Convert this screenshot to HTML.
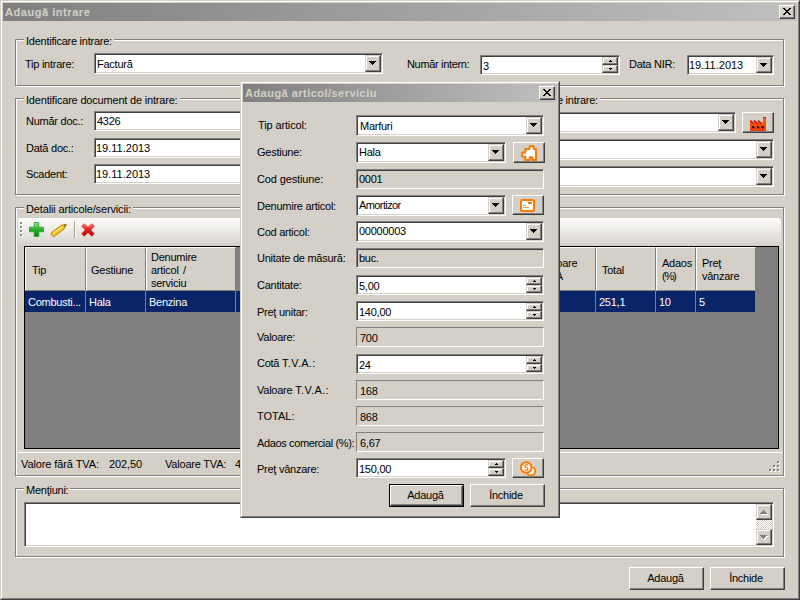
<!DOCTYPE html>
<html>
<head>
<meta charset="utf-8">
<title>Adaugă intrare</title>
<style>
*{box-sizing:border-box;margin:0;padding:0}
html,body{width:800px;height:600px;overflow:hidden;background:#d4d0c8}
body{font-family:"Liberation Sans",sans-serif;font-size:11px;color:#000;position:relative;letter-spacing:-.25px}
.a{position:absolute}
.t{position:absolute;white-space:nowrap;line-height:13px;height:13px}
/* window frames */
.win{position:absolute;background:#d4d0c8;border:1px solid;border-color:#d4d0c8 #404040 #404040 #d4d0c8}
.win>.in{position:absolute;left:0;top:0;right:0;bottom:0;border:1px solid;border-color:#fff #808080 #808080 #fff}
.cap{position:absolute;height:18px;background:linear-gradient(90deg,#808080,#c0c0c0);color:#d4d0c8;font-weight:bold;font-size:11px;line-height:18px;white-space:nowrap;overflow:hidden}
.cap span{position:absolute;top:0;letter-spacing:.55px}
/* raised button */
.btn{position:absolute;background:#d4d0c8;border:1px solid;border-color:#fff #404040 #404040 #fff;box-shadow:inset -1px -1px 0 #808080,inset 1px 1px 0 #d4d0c8;text-align:center}
.btn.def{outline:1px solid #000}
/* sunken box */
.sk{position:absolute;background:#fff;border:1px solid;border-color:#808080 #fff #fff #808080;box-shadow:inset 1px 1px 0 #404040,inset -1px -1px 0 #d4d0c8;overflow:hidden}
.sk.dis{background:#d4d0c8}
.sk .v{position:absolute;left:3px;top:4px;line-height:13px;white-space:nowrap}
/* group box */
.gb{position:absolute;border:1px solid #808080;box-shadow:1px 1px 0 #fff,inset 1px 1px 0 #fff}
.gb>.lg{position:absolute;top:-5px;left:8px;background:#d4d0c8;padding:0 2px;line-height:13px;white-space:nowrap}
/* small arrow glyphs */
.dn{position:absolute;width:7px;height:4px;background:#000;clip-path:polygon(0 0,7px 0,7px 1px,6px 1px,6px 2px,5px 2px,5px 3px,4px 3px,4px 4px,3px 4px,3px 3px,2px 3px,2px 2px,1px 2px,1px 1px,0 1px)}
.upa{position:absolute;width:7px;height:4px;background:#000;clip-path:polygon(3px 0,4px 0,4px 1px,5px 1px,5px 2px,6px 2px,6px 3px,7px 3px,7px 4px,0 4px,0 3px,1px 3px,1px 2px,2px 2px,2px 1px,3px 1px)}
.up3{position:absolute;width:0;height:0;border:3px solid transparent;border-bottom-color:#000;border-top:0}
.dn3{position:absolute;width:0;height:0;border:3px solid transparent;border-top-color:#000;border-bottom:0}

.hd{background:#d4d0c8;border-left:1px solid #fff;border-top:1px solid #fff;border-right:1px solid #808080;border-bottom:1px solid #808080;overflow:hidden}
.hd span{position:absolute;left:6px;line-height:13px;white-space:nowrap}
.rc{top:291px;height:21px;color:#fff;border-right:1px solid #808080;overflow:hidden}
.rc span{position:absolute;left:3px;top:5px;line-height:13px;white-space:nowrap}
.st{letter-spacing:-.1px}

.sb{position:absolute;background:#d4d0c8;border:1px solid;border-color:#d4d0c8 #404040 #404040 #d4d0c8;box-shadow:inset -1px -1px 0 #808080,inset 1px 1px 0 #fff}
.au,.ad{position:absolute;width:3px;height:1px;background:#000}
.au:after,.ad:after{content:"";position:absolute;left:1px;width:1px;height:1px;background:#000}
.au:after{top:-1px}.ad:after{top:1px}
.ic{position:absolute}
.lb{position:absolute;background:#d4d0c8;border:1px solid;border-color:#808080 #fff #fff #808080;overflow:hidden}
.lb .v{position:absolute;left:3px;top:4px;line-height:13px;white-space:nowrap}
</style>
</head>
<body>

<!-- ================= MAIN WINDOW ================= -->
<div class="win" style="left:0;top:0;width:800px;height:600px"><div class="in"></div></div>
<div class="cap" style="left:3px;top:3px;width:794px"><span style="left:2px">Adaugă intrare</span></div>
<!-- close -->
<div class="btn" style="left:779px;top:5px;width:16px;height:14px">
<svg class="a" style="left:3px;top:2px" width="8" height="7" viewBox="0 0 8 7"><path d="M0 0h2v1h1v1h2v-1h1v-1h2v1h-1v1h-1v1h-1v1h1v1h1v1h1v1h-2v-1h-1v-1h-2v1h-1v1h-2v-1h1v-1h1v-1h1v-1h-1v-1h-1v-1h-1z" fill="#000"/></svg>
</div>

<!-- group 1 -->
<div class="gb" style="left:15px;top:39px;width:769px;height:47px"><div class="lg">Identificare intrare:</div></div>
<div class="t" style="left:25px;top:58px">Tip intrare:</div>
<div class="sk" style="left:94px;top:53px;width:289px;height:21px"><div class="v" style="left:2px">Factură</div>
  <div class="sb" style="right:1px;top:1px;width:16px;height:17px"><div class="dn" style="left:3px;top:5px"></div></div></div>
<div class="t" style="left:407px;top:58px;letter-spacing:-.33px">Număr intern:</div>
<div class="sk" style="left:480px;top:55px;width:140px;height:20px"><div class="v" style="left:2px;top:4px">3</div>
  <div class="sb" style="right:1px;top:1px;width:16px;height:8px"><div class="au" style="left:6px;top:3px"></div></div>
  <div class="sb" style="right:1px;top:9px;width:16px;height:8px"><div class="ad" style="left:6px;top:2px"></div></div></div>
<div class="t" style="left:629px;top:58px">Data NIR:</div>
<div class="sk" style="left:687px;top:55px;width:87px;height:20px"><div class="v" style="left:1px;top:3px;letter-spacing:0">19.11.2013</div>
  <div class="sb" style="right:1px;top:1px;width:16px;height:16px"><div class="dn" style="left:3px;top:5px"></div></div></div>

<!-- group 2 left -->
<div class="gb" style="left:15px;top:98px;width:400px;height:97px"><div class="lg" style="letter-spacing:-.19px">Identificare document de intrare:</div></div>
<div class="t" style="left:26px;top:115px">Număr doc.:</div>
<div class="sk" style="left:94px;top:111px;width:200px;height:20px"><div class="v" style="left:2px;top:3px">4326</div></div>
<div class="t" style="left:26px;top:142px">Dată doc.:</div>
<div class="sk" style="left:94px;top:138px;width:200px;height:20px"><div class="v" style="left:1px;top:3px;letter-spacing:0">19.11.2013</div></div>
<div class="t" style="left:26px;top:168px">Scadent:</div>
<div class="sk" style="left:94px;top:164px;width:200px;height:20px"><div class="v" style="left:1px;top:3px;letter-spacing:0">19.11.2013</div></div>

<!-- group 2 right -->
<div class="gb" style="left:430px;top:98px;width:354px;height:97px"><div class="lg" style="left:36px">Identificare sursă de intrare:</div></div>
<div class="sk" style="left:500px;top:112px;width:236px;height:21px">
  <div class="sb" style="right:1px;top:1px;width:16px;height:17px"><div class="dn" style="left:3px;top:5px"></div></div></div>
<div class="btn" id="bfac" style="left:742px;top:112px;width:32px;height:21px"><svg class="ic" style="left:6px;top:3px" width="18" height="16" viewBox="0 0 18 16"><defs><linearGradient id="fg" x1="0" y1="0" x2="0" y2="1"><stop offset="0" stop-color="#ff5a1e"/><stop offset="1" stop-color="#f23c00"/></linearGradient></defs><path d="M1 15V4L4.8 7.5V4L8.8 7.5V4L12.8 7.5H13.6L14.3 1H17V15Z" fill="url(#fg)"/><path d="M1.2 4.4L4.6 7.5M5 4.4L8.6 7.5M9 4.4L12.8 7.6" stroke="#a81414" stroke-width="1.3" fill="none"/><rect x="14.3" y="1" width="2.7" height="1" fill="#c42020"/><rect x="3.2" y="10.2" width="2.1" height="2.1" fill="#0c0c2a"/><rect x="8" y="10.2" width="2.1" height="2.1" fill="#0c0c2a"/><rect x="12.6" y="10.2" width="2.1" height="2.1" fill="#0c0c2a"/></svg></div>
<div class="sk" style="left:500px;top:139px;width:274px;height:21px">
  <div class="sb" style="right:1px;top:1px;width:16px;height:17px"><div class="dn" style="left:3px;top:5px"></div></div></div>
<div class="sk" style="left:500px;top:166px;width:274px;height:21px">
  <div class="sb" style="right:1px;top:1px;width:16px;height:17px"><div class="dn" style="left:3px;top:5px"></div></div></div>

<!-- group 3 -->
<div class="gb" style="left:15px;top:207px;width:769px;height:269px"><div class="lg" style="letter-spacing:-.15px">Detalii articole/servicii:</div></div>
<!-- toolbar -->
<div class="a" id="tool" style="left:18px;top:218px;width:763px;height:26px;background:linear-gradient(180deg,#fcfcfb 0%,#f7f6f4 18%,#eeece8 45%,#d8d5ce 100%);border-radius:0 3px 3px 0"></div>
<svg class="a" style="left:20px;top:222px" width="3" height="15" viewBox="0 0 3 15"><g fill="#fff"><rect x="1" y="1" width="2" height="2"/><rect x="1" y="5" width="2" height="2"/><rect x="1" y="9" width="2" height="2"/><rect x="1" y="13" width="2" height="2"/></g><g fill="#8c8a84"><rect x="0" y="0" width="2" height="2"/><rect x="0" y="4" width="2" height="2"/><rect x="0" y="8" width="2" height="2"/><rect x="0" y="12" width="2" height="2"/></g></svg>
<div class="a" style="left:74px;top:221px;width:1px;height:17px;background:#a5a29a"></div>
<div class="a" style="left:75px;top:221px;width:1px;height:17px;background:#fff"></div>

<svg class="ic" style="left:29px;top:222px" width="15" height="15" viewBox="0 0 15 15"><defs><linearGradient id="gg" x1="0" y1="0" x2="0" y2="1"><stop offset="0" stop-color="#8fe88a"/><stop offset=".45" stop-color="#2fb52f"/><stop offset="1" stop-color="#0a7d0a"/></linearGradient></defs><path d="M5.2.5h4.6v4.7h4.7v4.6H9.8v4.7H5.2V9.8H.5V5.2h4.7z" fill="url(#gg)" stroke="#2a9a2a" stroke-width=".8" stroke-linejoin="round"/></svg>
<svg class="ic" style="left:50px;top:221px" width="19" height="17" viewBox="0 0 19 17"><g transform="rotate(-37 9.5 8.5)"><path d="M1.2 6.3H13.5L18 8.5L13.5 10.7H1.2Q0 10.7 0 8.5Q0 6.3 1.2 6.3Z" fill="#ffc82a" stroke="#c8920a" stroke-width="1"/><path d="M1.5 7.8H13.3" stroke="#ffe88a" stroke-width="1"/><path d="M15.2 7.2L18 8.5L15.2 9.8Z" fill="#6b6420"/></g></svg>
<svg class="ic" style="left:81px;top:223px" width="14" height="14" viewBox="0 0 14 14"><defs><linearGradient id="rg" x1="0" y1="0" x2="0" y2="1"><stop offset="0" stop-color="#ff9088"/><stop offset=".4" stop-color="#ea2424"/><stop offset="1" stop-color="#b40000"/></linearGradient></defs><path d="M3.3.7L7 4.4L10.7.7L13.3 3.3L9.6 7L13.3 10.7L10.7 13.3L7 9.6L3.3 13.3L.7 10.7L4.4 7L.7 3.3Z" fill="url(#rg)" stroke="#cc1c1c" stroke-width=".7" stroke-linejoin="round"/></svg>
<!-- grid -->
<div class="a" id="grid" style="left:24px;top:246px;width:755px;height:203px;background:#808080;border:1px solid #000"></div>
<div class="a hd" style="left:25px;top:247px;width:61px;height:44px"><span style="top:16px">Tip</span></div>
<div class="a hd" style="left:86px;top:247px;width:60px;height:44px"><span style="left:4px;top:16px">Gestiune</span></div>
<div class="a hd" style="left:146px;top:247px;width:90px;height:44px"><span style="left:4px;top:3px;word-spacing:1.5px">Denumire<br>articol /<br>serviciu</span></div>
<div class="a hd" style="left:536px;top:247px;width:60px;height:44px"><span style="left:5px;top:9px">Valoare<br><span style="position:static;letter-spacing:.2px">TVA</span></span></div>
<div class="a hd" style="left:596px;top:247px;width:60px;height:44px"><span style="left:5px;top:16px">Total</span></div>
<div class="a hd" style="left:656px;top:247px;width:40px;height:44px"><span style="left:5px;top:9px">Adaos<br><span style="position:static;letter-spacing:-1.2px">(%)</span></span></div>
<div class="a hd" style="left:696px;top:247px;width:60px;height:44px"><span style="left:5px;top:9px">Preţ<br>vânzare</span></div>
<div class="a" style="left:25px;top:291px;width:731px;height:21px;background:#0a246a"></div>
<div class="a rc" style="left:25px;width:61px"><span>Combusti...</span></div>
<div class="a rc" style="left:86px;width:60px"><span>Hala</span></div>
<div class="a rc" style="left:146px;width:90px"><span>Benzina</span></div>
<div class="a rc" style="left:536px;width:60px"></div>
<div class="a rc" style="left:596px;width:60px"><span>251,1</span></div>
<div class="a rc" style="left:656px;width:40px"><span>10</span></div>
<div class="a rc" style="left:696px;width:60px"><span>5</span></div>

<!-- status -->
<div class="a" style="left:17px;top:452px;width:766px;height:1px;background:#fff"></div>
<div class="t st" style="left:21px;top:458px">Valore fără TVA:</div>
<div class="t st" style="left:109px;top:458px">202,50</div>
<div class="t st" style="left:165px;top:458px;letter-spacing:-.2px">Valoare TVA:</div>
<div class="t st" style="left:235px;top:458px">48,60</div>

<!-- mentiuni -->
<div class="gb" style="left:15px;top:488px;width:769px;height:69px"><div class="lg">Menţiuni:</div></div>
<div class="sk" style="left:24px;top:502px;width:750px;height:45px">
  <div class="a" style="right:1px;top:1px;width:16px;height:41px;background:repeating-conic-gradient(#fff 0 25%,#d4d0c8 0 50%) 0 0/2px 2px"></div>
  <div class="sb" style="right:1px;top:1px;width:16px;height:16px"><div class="upa" style="left:4px;top:6px;background:#fff"></div><div class="upa" style="left:3px;top:5px;background:#808080"></div></div>
  <div class="sb" style="right:1px;top:26px;width:16px;height:16px"><div class="dn" style="left:4px;top:6px;background:#fff"></div><div class="dn" style="left:3px;top:5px;background:#808080"></div></div>
</div>

<!-- size grip -->
<svg class="a" style="left:768px;top:460px" width="12" height="12" viewBox="0 0 12 12"><g fill="#fff"><rect x="10" y="2" width="2" height="2"/><rect x="6" y="6" width="2" height="2"/><rect x="10" y="6" width="2" height="2"/><rect x="2" y="10" width="2" height="2"/><rect x="6" y="10" width="2" height="2"/><rect x="10" y="10" width="2" height="2"/></g><g fill="#808080"><rect x="9" y="1" width="2" height="2"/><rect x="5" y="5" width="2" height="2"/><rect x="9" y="5" width="2" height="2"/><rect x="1" y="9" width="2" height="2"/><rect x="5" y="9" width="2" height="2"/><rect x="9" y="9" width="2" height="2"/></g></svg>

<!-- bottom buttons -->
<div class="btn" style="left:629px;top:567px;width:75px;height:23px"><div class="t" style="left:-2px;right:0;top:4px">Adaugă</div></div>
<div class="btn" style="left:710px;top:567px;width:75px;height:23px"><div class="t" style="left:-3px;right:0;top:4px">Închide</div></div>

<!-- ================= INNER DIALOG ================= -->
<div class="win" style="left:240px;top:81px;width:320px;height:437px"><div class="in"></div></div>
<div class="cap" style="left:243px;top:84px;width:314px"><span style="left:2px;letter-spacing:.47px">Adaugă articol/serviciu</span></div>
<div class="btn" style="left:539px;top:86px;width:16px;height:14px">
<svg class="a" style="left:3px;top:2px" width="8" height="7" viewBox="0 0 8 7"><path d="M0 0h2v1h1v1h2v-1h1v-1h2v1h-1v1h-1v1h-1v1h1v1h1v1h1v1h-2v-1h-1v-1h-2v1h-1v1h-2v-1h1v-1h1v-1h1v-1h-1v-1h-1v-1h-1z" fill="#000"/></svg>
</div>
<div class="t" style="left:258px;top:119px;letter-spacing:-.13px">Tip articol:</div>
<div class="sk" style="left:356px;top:115px;width:188px;height:21px"><div class="v">Marfuri</div><div class="sb" style="right:1px;top:1px;width:16px;height:17px"><div class="dn" style="left:3px;top:5px"></div></div></div>
<div class="t" style="left:257px;top:146px">Gestiune:</div>
<div class="sk" style="left:356px;top:142px;width:150px;height:21px"><div class="v" style="left:2px;top:3px">Hala</div><div class="sb" style="right:1px;top:1px;width:16px;height:17px"><div class="dn" style="left:3px;top:5px"></div></div></div>
<div class="btn ib" style="left:513px;top:142px;width:32px;height:21px"><svg class="ic" style="left:7px;top:2px" width="16" height="16" viewBox="0 0 16 16"><path d="M4.3 4H8.6V2Q8.6 1 9.6 1H11.8Q12.8 1 12.8 2V4H15V15H11.4V12.2H8.6V15H4.3V11.8H2Q1 11.8 1 10.8V8.4Q1 7.4 2 7.4H4.3Z" fill="#fff" stroke="#ff7a00" stroke-width="2" stroke-linejoin="round"/></svg></div>
<div class="t" style="left:257px;top:173px;letter-spacing:-.14px">Cod gestiune:</div>
<div class="sk dis" style="left:356px;top:169px;width:188px;height:20px"><div class="v" style="left:2px;top:3px">0001</div></div>
<div class="t" style="left:257px;top:200px">Denumire articol:</div>
<div class="sk" style="left:356px;top:195px;width:150px;height:21px"><div class="v" style="left:2px;top:3px;letter-spacing:-.6px">Amortizor</div><div class="sb" style="right:1px;top:1px;width:16px;height:17px"><div class="dn" style="left:3px;top:5px"></div></div></div>
<div class="btn ib" style="left:512px;top:195px;width:32px;height:20px"><svg class="ic" style="left:7px;top:3px" width="16" height="14" viewBox="0 0 16 14"><rect x="1" y="1" width="13" height="11" rx="1.5" fill="#fff" stroke="#ff7a00" stroke-width="2"/><rect x="8" y="3" width="4" height="2" fill="#ff7a00"/><rect x="3" y="6" width="3" height="1" fill="#ff9a3c"/><rect x="3" y="8" width="6" height="1" fill="#ff9a3c"/></svg></div>
<div class="t" style="left:257px;top:226px">Cod articol:</div>
<div class="sk" style="left:356px;top:221px;width:188px;height:21px"><div class="v" style="left:2px;top:3px">00000003</div><div class="sb" style="right:1px;top:1px;width:16px;height:17px"><div class="dn" style="left:3px;top:5px"></div></div></div>
<div class="t" style="left:257px;top:252px">Unitate de măsură:</div>
<div class="sk dis" style="left:356px;top:248px;width:188px;height:20px"><div class="v" style="left:2px;top:3px">buc.</div></div>
<div class="t" style="left:257px;top:279px">Cantitate:</div>
<div class="sk" style="left:356px;top:275px;width:188px;height:20px"><div class="v" style="left:2px;top:4px">5,00</div><div class="sb" style="right:1px;top:1px;width:16px;height:8px"><div class="au" style="left:6px;top:3px"></div></div><div class="sb" style="right:1px;top:9px;width:16px;height:8px"><div class="ad" style="left:6px;top:2px"></div></div></div>
<div class="t" style="left:257px;top:306px">Preţ unitar:</div>
<div class="sk" style="left:356px;top:301px;width:188px;height:20px"><div class="v" style="left:2px;top:4px">140,00</div><div class="sb" style="right:1px;top:1px;width:16px;height:8px"><div class="au" style="left:6px;top:3px"></div></div><div class="sb" style="right:1px;top:9px;width:16px;height:8px"><div class="ad" style="left:6px;top:2px"></div></div></div>
<div class="t" style="left:257px;top:331px">Valoare:</div>
<div class="lb" style="left:356px;top:327px;width:188px;height:20px"><div class="v">700</div></div>
<div class="t" style="left:257px;top:357px">Cotă <span style="letter-spacing:.3px">T.V.A.:</span></div>
<div class="sk" style="left:356px;top:354px;width:188px;height:20px"><div class="v" style="left:2px;top:4px">24</div><div class="sb" style="right:1px;top:1px;width:16px;height:8px"><div class="au" style="left:6px;top:3px"></div></div><div class="sb" style="right:1px;top:9px;width:16px;height:8px"><div class="ad" style="left:6px;top:2px"></div></div></div>
<div class="t" style="left:257px;top:384px">Valoare <span style="letter-spacing:.35px">T.V.A.:</span></div>
<div class="lb" style="left:356px;top:380px;width:188px;height:20px"><div class="v">168</div></div>
<div class="t" style="left:257px;top:410px;letter-spacing:0">TOTAL:</div>
<div class="lb" style="left:356px;top:406px;width:188px;height:20px"><div class="v">868</div></div>
<div class="t" style="left:257px;top:437px;letter-spacing:-.37px">Adaos comercial (%):</div>
<div class="lb" style="left:356px;top:432px;width:188px;height:20px"><div class="v">6,67</div></div>
<div class="t" style="left:257px;top:463px">Preţ vânzare:</div>
<div class="sk" style="left:356px;top:458px;width:150px;height:20px"><div class="v" style="left:2px;top:4px">150,00</div><div class="sb" style="right:1px;top:1px;width:16px;height:8px"><div class="au" style="left:6px;top:3px"></div></div><div class="sb" style="right:1px;top:9px;width:16px;height:8px"><div class="ad" style="left:6px;top:2px"></div></div></div>
<div class="btn ib" style="left:512px;top:458px;width:32px;height:20px"><svg class="ic" style="left:6px;top:1px" width="18" height="17" viewBox="0 0 18 17"><circle cx="11.8" cy="11.2" r="4.3" fill="#fff" stroke="#ff7a00" stroke-width="1.9"/><circle cx="7.2" cy="7.5" r="5.3" fill="#fff" stroke="#ff7a00" stroke-width="2"/><path d="M8.9 5.6Q8.7 4.6 7.3 4.6Q5.8 4.6 5.8 6Q5.8 7.2 7.3 7.4Q8.9 7.7 8.9 9Q8.9 10.3 7.3 10.3Q5.7 10.3 5.6 9.2" fill="none" stroke="#ff7a00" stroke-width="1.3"/></svg></div>
<div class="btn def" style="left:390px;top:485px;width:73px;height:21px"><div class="t" style="left:-2px;right:0;top:3px">Adaugă</div></div>
<div class="btn" style="left:470px;top:484px;width:75px;height:23px"><div class="t" style="left:-3px;right:0;top:4px">Închide</div></div>

</body>
</html>
